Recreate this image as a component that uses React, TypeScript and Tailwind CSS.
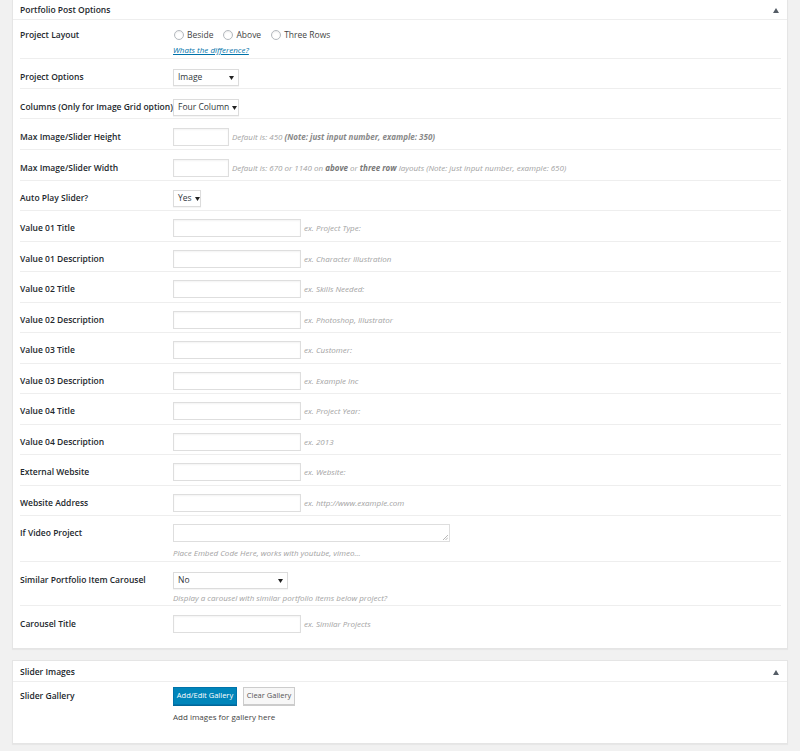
import React from "react";

const font = { fontFamily: '"Open Sans", "Noto Sans", sans-serif' };

function Caret() {
  return (
    <svg width="5" height="4" viewBox="0 0 5 4" className="shrink-0">
      <path d="M0 0 L5 0 L2.5 4 Z" fill="#222" />
    </svg>
  );
}

function FakeSelect({ value, width }: { value: string; width: string }) {
  return (
    <div
      className={`${width} h-[17px] border border-[#dcdcdc] bg-white flex items-center justify-between gap-[3px] pl-[4px] pr-[4px] text-[8.5px] whitespace-nowrap text-[#32373c] shadow-[0_1px_1px_rgba(0,0,0,0.04)]`}
    >
      <span>{value}</span>
      <Caret />
    </div>
  );
}

function TextInput({ width }: { width: string }) {
  return (
    <div
      className={`${width} h-[18px] border border-[#dedede] bg-white shadow-[inset_0_1px_2px_rgba(0,0,0,0.05)]`}
    />
  );
}

function Help({ children }: { children: React.ReactNode }) {
  return <span className="text-[8px] italic text-[#a3a3a3] leading-none whitespace-nowrap">{children}</span>;
}

function Row({
  label,
  h,
  pt,
  ch,
  last,
  children,
}: {
  label: string;
  h: string;
  pt: string;
  ch: string;
  last?: boolean;
  children: React.ReactNode;
}) {
  return (
    <div className={`flex ${h} ${pt} ${last ? "" : "border-b border-[#eeeeee]"}`}>
      <div className={`w-[153px] shrink-0 ${ch} flex items-center text-[8.5px] font-semibold text-[#23282d] whitespace-nowrap`}>
        {label}
      </div>
      <div className="flex-1 text-[8px] leading-none">{children}</div>
    </div>
  );
}

function Radio({ label }: { label: string }) {
  return (
    <div className="flex items-center">
      <span className="w-[10px] h-[10px] rounded-full border border-[#b4b9be] bg-white shadow-[inset_0_1px_2px_rgba(0,0,0,0.08)]" />
      <span className="ml-[3px] text-[8.5px] text-[#444]">{label}</span>
    </div>
  );
}

function InputRow({ label, hint, h }: { label: string; hint: string; h: string }) {
  return (
    <Row label={label} h={h} pt="pt-[8px]" ch="h-[18px]">
      <div className="flex items-center h-[18px] gap-[3px]">
        <TextInput width="w-[128px]" />
        <Help>{hint}</Help>
      </div>
    </Row>
  );
}

function PanelHeader({ title, h }: { title: string; h: string }) {
  return (
    <div className={`${h} pt-[2px] border-b border-[#eeeeee] flex items-center justify-between pl-[7px] pr-[8px]`}>
      <span className="text-[8.5px] font-semibold text-[#23282d]">{title}</span>
      <svg width="6" height="5" viewBox="0 0 6 5">
        <path d="M0 5 L3 0 L6 5 Z" fill="#555d66" />
      </svg>
    </div>
  );
}

export default function App() {
  const values = [
    ["Value 01 Title", "ex. Project Type:", "h-[31px]"],
    ["Value 01 Description", "ex. Character Illustration", "h-[30px]"],
    ["Value 02 Title", "ex. Skills Needed:", "h-[31px]"],
    ["Value 02 Description", "ex. Photoshop, Illustrator", "h-[30px]"],
    ["Value 03 Title", "ex. Customer:", "h-[31px]"],
    ["Value 03 Description", "ex. Example Inc", "h-[30px]"],
    ["Value 04 Title", "ex. Project Year:", "h-[31px]"],
    ["Value 04 Description", "ex. 2013", "h-[30px]"],
    ["External Website", "ex. Website:", "h-[31px]"],
    ["Website Address", "ex. http://www.example.com", "h-[30px]"],
  ];

  return (
    <div className="min-h-[751px] bg-[#f1f1f1] pl-[12px] pr-[12px] leading-none" style={font}>
      {/* Portfolio Post Options */}
      <div className="bg-white border-x border-b border-[#e5e5e5] shadow-[0_1px_1px_rgba(0,0,0,0.04)] h-[649px]">
        <PanelHeader title="Portfolio Post Options" h="h-[20px]" />
        <div className="pl-[7px] pr-[6px]">
          <Row label="Project Layout" h="h-[39px]" pt="pt-[9px]" ch="h-[12px]">
            <div className="flex items-center gap-[10px] h-[12px] pl-[1px]">
              <Radio label="Beside" />
              <Radio label="Above" />
              <Radio label="Three Rows" />
            </div>
            <div className="mt-[5px] text-[8px] italic underline text-[#0073aa] leading-none">
              Whats the difference?
            </div>
          </Row>
          <Row label="Project Options" h="h-[30px]" pt="pt-[10px]" ch="h-[17px]">
            <FakeSelect value="Image" width="w-[66px]" />
          </Row>
          <Row label="Columns (Only for Image Grid option)" h="h-[30px]" pt="pt-[10px]" ch="h-[17px]">
            <FakeSelect value="Four Column" width="w-[66px]" />
          </Row>
          <Row label="Max Image/Slider Height" h="h-[31px]" pt="pt-[9px]" ch="h-[18px]">
            <div className="flex items-center h-[18px] gap-[3px]">
              <TextInput width="w-[56px]" />
              <Help>
                Default is: 450 <b className="text-[#888]">(Note: just input number, example: 350)</b>
              </Help>
            </div>
          </Row>
          <Row label="Max Image/Slider Width" h="h-[31px]" pt="pt-[9px]" ch="h-[18px]">
            <div className="flex items-center h-[18px] gap-[3px]">
              <TextInput width="w-[56px]" />
              <Help>
                Default is: 670 or 1140 on <b className="text-[#777]">above</b> or{" "}
                <b className="text-[#777]">three row</b> layouts (Note: just input number, example: 650)
              </Help>
            </div>
          </Row>
          <Row label="Auto Play Slider?" h="h-[30px]" pt="pt-[9px]" ch="h-[17px]">
            <FakeSelect value="Yes" width="w-[28px]" />
          </Row>
          {values.map(([label, hint, h]) => (
            <InputRow key={label} label={label} hint={hint} h={h} />
          ))}
          <Row label="If Video Project" h="h-[46px]" pt="pt-[8px]" ch="h-[18px]">
            <div className="w-[277px] h-[18px] border border-[#dedede] bg-white relative">
              <svg width="5" height="5" viewBox="0 0 5 5" className="absolute right-[1px] bottom-[1px]">
                <path d="M5 0 L0 5 M5 2.5 L2.5 5" stroke="#999" strokeWidth="0.7" />
              </svg>
            </div>
            <div className="mt-[7px] h-[8px] flex items-center">
              <Help>Place Embed Code Here, works with youtube, vimeo...</Help>
            </div>
          </Row>
          <Row label="Similar Portfolio Item Carousel" h="h-[44px]" pt="pt-[10px]" ch="h-[17px]">
            <FakeSelect value="No" width="w-[115px]" />
            <div className="mt-[5px] h-[8px] flex items-center">
              <Help>Display a carousel with similar portfolio items below project?</Help>
            </div>
          </Row>
          <Row label="Carousel Title" h="h-[34px]" pt="pt-[9px]" ch="h-[18px]" last>
            <div className="flex items-center h-[18px] gap-[3px]">
              <TextInput width="w-[128px]" />
              <Help>ex. Similar Projects</Help>
            </div>
          </Row>
        </div>
      </div>

      {/* Slider Images */}
      <div className="mt-[11px] bg-white border border-[#e5e5e5] shadow-[0_1px_1px_rgba(0,0,0,0.04)] h-[84px]">
        <PanelHeader title="Slider Images" h="h-[21px]" />
        <div className="pl-[7px] pr-[6px]">
          <Row label="Slider Gallery" h="h-[60px]" pt="pt-[5px]" ch="h-[18px]" last>
            <div className="flex items-center gap-[6px]">
              <div className="h-[18px] w-[64px] justify-center bg-[#0085ba] border border-[#0073aa] text-white text-[7.5px] flex items-center shadow-[0_1px_0_#006799]">
                Add/Edit Gallery
              </div>
              <div className="h-[18px] w-[52px] justify-center bg-[#f7f7f7] border border-[#cccccc] text-[#555] text-[7.5px] flex items-center shadow-[0_1px_0_#ccc]">
                Clear Gallery
              </div>
            </div>
            <div className="mt-[8px] h-[8px] flex items-center text-[8px] text-[#444]">
              Add images for gallery here
            </div>
          </Row>
        </div>
      </div>
    </div>
  );
}
